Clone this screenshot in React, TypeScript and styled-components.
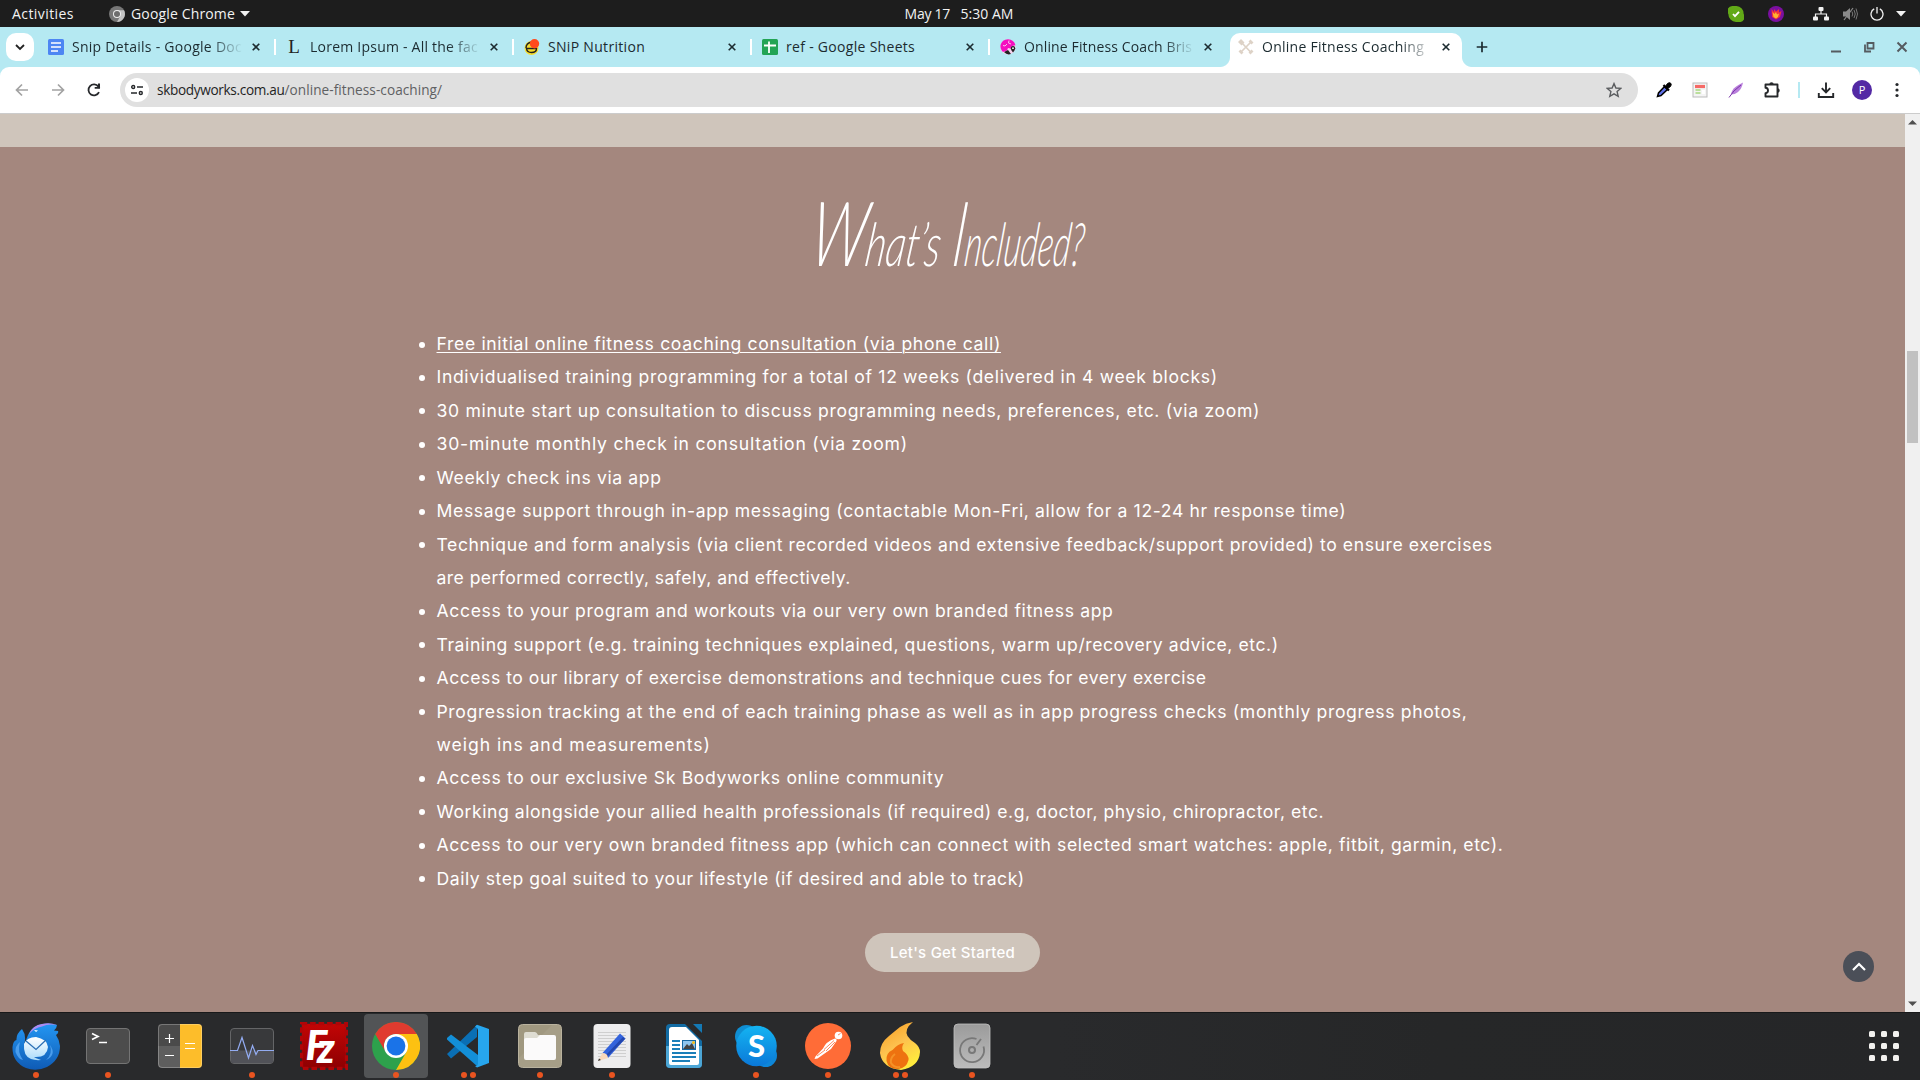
import React from "react";
import styled, { createGlobalStyle } from "styled-components";

const UI = `"Open Sans", "Noto Sans", sans-serif`;
const BODY = `Inter, "Open Sans", sans-serif`;

const GlobalStyle = createGlobalStyle`
  * { box-sizing: border-box; }
  html, body { margin: 0; background: #262729; overflow: hidden; }
  svg { display: block; flex: none; }
`;

const Screen = styled.div`
  display: flex;
  flex-direction: column;
  width: 1920px;
  height: 1080px;
  overflow: hidden;
  font-family: ${UI};
`;

/* ---------- desktop top bar ---------- */

const TopBar = styled.header`
  display: grid;
  grid-template-columns: 1fr auto 1fr;
  flex: none;
  height: 27px;
  padding: 0 14px 0 12px;
  background: #1d1d1d;
  color: #f2f2f2;
  font-size: 14px;
  line-height: 27px;
`;

const TopGroup = styled.div<{ $gap?: number; $end?: boolean }>`
  display: flex;
  align-items: center;
  justify-content: ${(p) => (p.$end ? "flex-end" : "flex-start")};
  gap: ${(p) => p.$gap ?? 0}px;
`;

const Label = styled.span<{ $track?: number; $width?: number }>`
  width: ${(p) => (p.$width ? `${p.$width}px` : "auto")};
  letter-spacing: ${(p) => p.$track ?? 0}px;
  white-space: pre;
`;

const Spacer = styled.span<{ $w: number }>`
  flex: none;
  width: ${(p) => p.$w}px;
`;

/* ---------- browser tabs ---------- */

const TabStrip = styled.nav`
  display: flex;
  flex: none;
  height: 40px;
  padding-left: 6px;
  background: #b5e9f2;
`;

const TabSearch = styled.button`
  display: grid;
  place-items: center;
  width: 28px;
  height: 28px;
  margin: 6px 4px 0 0;
  padding: 0;
  border: 0;
  border-radius: 10px;
  background: #fff;
`;

const TabBox = styled.div<{ $active?: boolean }>`
  position: relative;
  display: flex;
  align-items: center;
  flex: none;
  width: ${(p) => (p.$active ? 232 : 238)}px;
  height: 34px;
  margin-top: 6px;
  margin-left: ${(p) => (p.$active ? 2 : 0)}px;
  padding: 0 0 6px ${(p) => (p.$active ? 8 : 10)}px;
  border-radius: 10px 10px 0 0;
  background: ${(p) => (p.$active ? "#fff" : "transparent")};

  &::before,
  &::after {
    content: "";
    display: ${(p) => (p.$active ? "block" : "none")};
    position: absolute;
    bottom: 0;
    width: 10px;
    height: 10px;
  }
  &::before {
    left: -10px;
    background: radial-gradient(circle at 0 0, transparent 9.5px, #fff 10.5px);
  }
  &::after {
    right: -10px;
    background: radial-gradient(circle at 100% 0, transparent 9.5px, #fff 10.5px);
  }
`;

const TabTitle = styled.span<{ $track: number; $fade?: boolean }>`
  flex: none;
  width: 170px;
  margin-left: 8px;
  overflow: hidden;
  color: #1c2b30;
  font-size: 14px;
  line-height: 28px;
  letter-spacing: ${(p) => p.$track}px;
  white-space: nowrap;
  mask-image: ${(p) =>
    p.$fade ? "linear-gradient(90deg, #000 138px, transparent 171px)" : "none"};
`;

const CloseSlot = styled.span`
  display: grid;
  flex: none;
  place-items: center;
  width: 16px;
  margin-left: 6px;
`;

const Divider = styled.i<{ $hidden?: boolean }>`
  flex: none;
  width: 2px;
  height: 16px;
  margin-left: 10px;
  background: ${(p) => (p.$hidden ? "transparent" : "#fff")};
`;

const StripActions = styled.div`
  display: flex;
  flex: 1;
  align-items: center;
  justify-content: space-between;
  padding: 0 10px 1px 12px;
`;

const WindowButtons = styled.div`
  display: flex;
  align-items: center;
  gap: 17px;
`;

/* ---------- browser toolbar ---------- */

const ToolbarWrap = styled.div`
  flex: none;
  height: 47px;
  background: #b5e9f2;
`;

const Toolbar = styled.div`
  display: flex;
  align-items: center;
  height: 47px;
  padding: 0 14px 1px 14px;
  border-bottom: 1px solid #cccccc;
  border-radius: 9px 9px 0 0;
  background: #fff;
`;

const NavButtons = styled.div`
  display: flex;
  gap: 20px;
  width: 106px;
`;

const AddressBar = styled.div`
  display: flex;
  flex: none;
  align-items: center;
  width: 1518px;
  height: 34px;
  padding: 0 16px 0 5px;
  border-radius: 17px;
  background: #e0e0e0;
`;

const SiteInfo = styled.span`
  display: grid;
  place-items: center;
  width: 24px;
  height: 24px;
  border-radius: 50%;
  background: #fff;
`;

const Url = styled.div`
  display: flex;
  flex: 1;
  margin-left: 8px;
  padding-bottom: 1px;
  font-size: 13.6px;
  color: #1f1f1f;
`;

const UrlPath = styled(Label)`
  color: #5f6163;
`;

const Extensions = styled.div`
  display: flex;
  align-items: center;
  gap: 18px;
  margin-left: 17px;
`;

const ExtDivider = styled.i`
  width: 2px;
  height: 16px;
  margin: 0 -1px;
  background: #b5e9f2;
`;

const Avatar = styled.span`
  display: grid;
  place-items: center;
  width: 20px;
  height: 20px;
  margin: 0 -1px 0 -1px;
  border-radius: 50%;
  background: #5329a4;
  color: #fff;
  font-size: 11px;
  line-height: 20px;
`;

/* ---------- page ---------- */

const Viewport = styled.div`
  position: relative;
  display: flex;
  flex: none;
  height: 898px;
`;

const Page = styled.main`
  display: flex;
  flex-direction: column;
  width: 1905px;
  background: #a4877e;
`;

const Band = styled.div`
  flex: none;
  height: 33px;
  background: #cfc5bb;
`;

const Section = styled.section`
  display: flex;
  flex-direction: column;
  align-items: center;
  padding-top: 36px;
  color: #fff;
`;

const Heading = styled.h2`
  display: grid;
  grid-template-columns: 143px 135px;
  width: 278px;
  height: 96px;
  margin: 0;
  font-family: Lato, "Open Sans", sans-serif;
  font-size: 60px;
  font-style: italic;
  font-weight: 300;
  line-height: 96px;
  white-space: nowrap;
`;

const Word = styled.span<{ $squeeze: number }>`
  display: block;
  width: max-content;
  margin-left: -6px;
  transform: scaleX(${(p) => p.$squeeze}) skewX(-12deg);
  transform-origin: 0 75%;

  &::first-letter {
    font-size: 90px;
  }
`;

const List = styled.ul`
  width: 1086px;
  margin: 48px 0 0;
  padding: 0;
  list-style: none;
  font-family: ${BODY};
  font-size: 17.6px;
  line-height: 33.42px;
`;

const Item = styled.li`
  display: grid;
  grid-template-columns: 27px 1fr;

  &::before {
    content: "";
    width: 6px;
    height: 6px;
    margin: 14.5px 0 0 9px;
    border-radius: 50%;
    background: #fff;
  }
`;

const Lines = styled.div<{ $underlined?: boolean }>`
  display: flex;
  flex-direction: column;
  align-items: flex-start;
  text-decoration: ${(p) => (p.$underlined ? "underline 1px" : "none")};
  text-underline-offset: 2px;
`;

const Line = styled.span<{ $track: number }>`
  letter-spacing: ${(p) => p.$track + 0.01}px;
  white-space: nowrap;
`;

const StartButton = styled.button`
  width: 175px;
  height: 39px;
  margin-top: 38px;
  padding: 0 0 1px;
  border: 0;
  border-radius: 20px;
  background: #cfc5bb;
  color: #fff;
  font: 500 15px ${BODY};
  letter-spacing: 0.25px;
`;

const BackToTop = styled.button`
  position: absolute;
  right: 46px;
  bottom: 30px;
  display: grid;
  place-items: center;
  width: 31px;
  height: 31px;
  padding: 0;
  border: 0;
  border-radius: 50%;
  background: #4b4f58;
`;

const ScrollTrack = styled.aside`
  display: flex;
  flex-direction: column;
  align-items: center;
  width: 15px;
  padding: 6px 0;
  background: #f0f0f0;
`;

const Thumb = styled.div`
  width: 11px;
  height: 92px;
  margin: 226px 0 auto;
  background: #c1c1c1;
`;

/* ---------- dock ---------- */

const Dock = styled.footer`
  display: flex;
  flex: none;
  align-items: flex-start;
  height: 68px;
  padding: 1px 18px 0 4px;
  border-top: 1px solid #18191a;
  background: linear-gradient(90deg, #292a2c 0, #292a2c 55%, #262728 75%, #252628 100%);
`;

const Tile = styled.div<{ $active?: boolean }>`
  display: flex;
  flex-direction: column;
  align-items: center;
  gap: 2px;
  width: 64px;
  height: 64px;
  margin-right: 8px;
  padding-top: 8px;
  border-radius: 4px;
  background: ${(p) => (p.$active ? "#525456" : "transparent")};
`;

const Dots = styled.div`
  display: flex;
  gap: 3px;
`;

const Dot = styled.i`
  width: 6px;
  height: 6px;
  border-radius: 50%;
  background: #e95420;
`;

const AppsGrid = styled.div`
  display: grid;
  grid-template-columns: repeat(3, 6px);
  gap: 6px;
  margin: 17px 3px 0 auto;
`;

const AppDot = styled.i`
  width: 6px;
  height: 6px;
  border-radius: 1.5px;
  background: #f2f1ef;
`;

/* ---------- small icons ---------- */

const Caret = () => (
  <svg width="10" height="6" viewBox="0 0 10 6"><path d="M0 0h10L5 5.5z" fill="#f2f2f2" /></svg>
);

const Close = () => (
  <svg width="8" height="8" viewBox="0 0 8 8"><path d="M.7.7l6.6 6.6M7.3.7L.7 7.3" stroke="#1c2b30" strokeWidth="1.6" /></svg>
);

const ChromeMono = () => (
  <svg width="16" height="16" viewBox="0 0 16 16">
    <circle cx="8" cy="8" r="8" fill="#777" />
    <path d="M8 4.2h7A8 8 0 0 1 8 16l3.4-6z" fill="#c4c4c4" />
    <circle cx="8" cy="8" r="4" fill="#eee" /><circle cx="8" cy="8" r="3" fill="#6d6d6d" />
  </svg>
);

const SkypeStatus = () => (
  <svg width="16" height="16" viewBox="0 0 16 16">
    <path d="M4.5 0h4A7.5 7.5 0 0 1 15.6 8 5 5 0 0 1 11 16H8A7.7 7.7 0 0 1 .4 8 5 5 0 0 1 4.500 0z" fill="#62a917" />
    <path d="M5 8l2 2.2 4-4.4" fill="none" stroke="#fff" strokeWidth="1.8" />
  </svg>
);

const FlameStatus = () => (
  <svg width="16" height="16" viewBox="0 0 16 16">
    <circle cx="8" cy="8" r="8" fill="#7b0fa0" />
    <path d="M3.500 3L6 6V3l2 2.500L11 3v3.500L13.500 5 12 11l-4 2.500L4 11z" fill="#f4323c" />
    <path d="M4.500 6l2 2L8 6l1 2.500L11 7.500 10 11l-2 1.500L5.500 11z" fill="#ffb52e" />
  </svg>
);

const Network = () => (
  <svg width="16" height="14" viewBox="0 0 16 14" fill="#f2f2f2">
    <rect x="5.500" y="0" width="5" height="4" rx="1" /><rect x="0" y="9.500" width="5" height="4" rx="1" /><rect x="11" y="9.500" width="5" height="4" rx="1" />
    <path d="M2.500 10V7h11v3M8 4v3" fill="none" stroke="#f2f2f2" strokeWidth="1.200" />
  </svg>
);

const Volume = () => (
  <svg width="16" height="14" viewBox="0 0 16 14">
    <path d="M1 4.500h3L8 1v12L4 9.500H1z" fill="#8a8a8a" />
    <path d="M10 4.500q1.500 2.500 0 5M12 3q2.500 4 0 8M14 1.500q3 5.500 0 11" fill="none" stroke="#777" />
    <path d="M2 13L11 1" stroke="#8a8a8a" strokeWidth="1.200" />
  </svg>
);

const Power = () => (
  <svg width="14" height="14" viewBox="0 0 14 14" fill="none" stroke="#f2f2f2" strokeWidth="1.300">
    <path d="M4.200 1.900a6 6 0 1 0 5.600 0M7 0v6.500" />
  </svg>
);

const DocsIcon = () => (
  <svg width="16" height="16" viewBox="0 0 16 16">
    <rect width="16" height="16" rx="1.500" fill="#4d86f3" />
    <path d="M3 4h10M3 8h10M3 12h7" stroke="#fff" strokeWidth="1.700" />
  </svg>
);

const LoremText = styled.span`
  flex: none;
  width: 16px;
  color: #222;
  font: 19px/16px "Liberation Serif", serif;
  text-align: center;
`;

const SnipIcon = () => (
  <svg width="16" height="16" viewBox="0 0 16 16">
    <circle cx="7.500" cy="9" r="7" fill="#f5dc2c" />
    <path d="M2 9q0-5 6-6M2.500 9.500h10q0 4-5 4-4.500 0-5-4z" fill="none" stroke="#222" strokeWidth="1.400" />
    <circle cx="10.500" cy="4.700" r="4.700" fill="#ff4a1d" />
  </svg>
);

const SheetsIcon = () => (
  <svg width="16" height="16" viewBox="0 0 16 16">
    <rect width="16" height="16" rx="1.500" fill="#23a455" />
    <path d="M2 6.500h12M7 2.500v11.500" stroke="#fff" strokeWidth="1.800" />
  </svg>
);

const GlobeIcon = () => (
  <svg width="16" height="16" viewBox="0 0 16 16">
    <circle cx="8" cy="8" r="7.600" fill="#f9d3f0" />
    <path d="M.5 6Q2 .5 8 .2q6 .3 7.500 6L12 7l-1.500 2.500L8 9l-1 2.500L3 13Q0 10 .5 6z" fill="#f50fc0" />
    <path d="M3 6.500l2 .5 2-2M9 1.500L8.500 4l2.500 1" fill="none" stroke="#fbd0f1" strokeWidth=".9" />
    <path d="M4 13l4-2 3 4q-4 1.500-7-2z" fill="#222" />
    <path d="M13 7a2.200 2.200 0 0 1 2.200 2.200Q15.200 11 13 13.500 10.800 11 10.800 9.200A2.200 2.200 0 0 1 13 7z" fill="#222" /><circle cx="13" cy="9.200" r=".9" fill="#fff" />
  </svg>
);

const WrenchIcon = () => (
  <svg width="16" height="16" viewBox="0 0 16 16" fill="none" stroke="#ddd2c6">
    <path d="M3.500 3.500l9.500 10M13 3L3 13" strokeWidth="1.700" />
    <path d="M1 4L4 1M2.500 5.500L5.500 2.500M11.500 1.500L14.500 4.500M1.500 11.500L4.500 14.500M11.500 14.500l3-3" strokeWidth="2.800" />
  </svg>
);

const ArrowIcon = ({ flip = false }: { flip?: boolean }) => (
  <svg width="16" height="16" viewBox="0 0 16 16" fill="none" stroke="#a2a2a2" strokeWidth="1.700">
    <path d={flip ? "M2 8h11M8 2.500L13.500 8 8 13.500" : "M14 8H3M8 2.500L2.500 8 8 13.500"} />
  </svg>
);

const Reload = () => (
  <svg width="16" height="16" viewBox="0 0 16 16">
    <path d="M13 10.200A5.500 5.500 0 1 1 12.400 4.600L13.500 6" fill="none" stroke="#26282b" strokeWidth="1.800" />
    <path d="M14 1.500v5.300H8.700V5H12V1.500z" fill="#26282b" />
  </svg>
);

const Tune = () => (
  <svg width="12" height="12" viewBox="0 0 12 12" fill="none" stroke="#26282b" strokeWidth="1.400">
    <circle cx="2.200" cy="3" r="1.500" /><circle cx="9.800" cy="9" r="1.500" /><path d="M6 3h6M0 9h6" />
  </svg>
);

const Star = () => (
  <svg width="16" height="16" viewBox="0 0 16 16">
    <path d="M8 1.600l1.900 4.400 4.800.4-3.600 3.200 1.100 4.700L8 11.800l-4.200 2.500 1.100-4.700L1.300 6.400l4.800-.4z" fill="none" stroke="#5a5c5f" strokeWidth="1.400" />
  </svg>
);

const Dropper = () => (
  <svg width="18" height="18" viewBox="0 0 18 18">
    <path d="M2.500 15.500l1-3.500 6-6.500 3 3-6.500 6z" fill="#5f70e6" stroke="#000" strokeWidth="1.500" />
    <path d="M8.500 4l5.500 5.500" stroke="#000" strokeWidth="2.200" />
    <path d="M10 6l2.500-3.500q2-1.500 3.200-.3t-.2 3.300l-3.500 2.500z" fill="#000" stroke="#000" />
  </svg>
);

const PageExt = () => (
  <svg width="18" height="18" viewBox="0 0 18 18">
    <rect x="2" y="2" width="14" height="14" fill="#f4f4f4" stroke="#bbb" />
    <path d="M4 5.500h10" stroke="#f56a66" strokeWidth="3.200" /><path d="M4.500 9h5M4.500 12h5" stroke="#a6d87c" strokeWidth="1.300" /><path d="M11 9h3v4h-3z" fill="#fff" />
  </svg>
);

const Feather = () => (
  <svg width="18" height="18" viewBox="0 0 18 18">
    <path d="M4 13.500Q4.500 9 8.500 6 12 3.500 16 1.500 15 7.500 11 11 8 13.500 4 13.500z" fill="#b97fdc" />
    <path d="M2 16.500Q6 9.500 14 4" fill="none" stroke="#7a36a8" />
  </svg>
);

const Puzzle = () => (
  <svg width="18" height="18" viewBox="0 0 18 18">
    <path d="M2.500 3.500h12v12h-12v-3.300q2.500-.2 2.500-2.700T2.500 6.800z" fill="none" stroke="#26282b" strokeWidth="1.900" strokeLinejoin="round" />
    <path d="M6.300 3.500a2.200 2.200 0 0 1 4.400 0zM14.500 7.300a2.200 2.200 0 0 1 0 4.400z" fill="#26282b" />
  </svg>
);

const Download = () => (
  <svg width="18" height="18" viewBox="0 0 18 18" fill="none" stroke="#26282b" strokeWidth="1.900">
    <path d="M9 1.500V11M4.800 7.200L9 11.400l4.200-4.200M1.800 12v4h14.400v-4" />
  </svg>
);

const Kebab = () => (
  <svg width="16" height="16" viewBox="0 0 16 16" fill="#26282b">
    <circle cx="8" cy="2.500" r="1.600" /><circle cx="8" cy="8" r="1.600" /><circle cx="8" cy="13.500" r="1.600" />
  </svg>
);

/* ---------- dock icons ---------- */

const Icon = ({ children }: { children: React.ReactNode }) => (
  <svg width="48" height="48" viewBox="0 0 48 48">{children}</svg>
);

const Thunderbird = () => (
  <Icon>
    <defs>
      <linearGradient id="tb" x1="0" y1="0" x2="0" y2="1"><stop offset="0" stopColor="#2497f3" /><stop offset="1" stopColor="#0f5bb5" /></linearGradient>
      <linearGradient id="tbm" x1="0" y1="0" x2="0" y2="1"><stop offset="0" stopColor="#fff" /><stop offset="1" stopColor="#a9dbfb" /></linearGradient>
    </defs>
    <path d="M10 7Q4 12 4.500 18 1 19 .5 25 0 40 14 46q10 4 21-1Q48 38 48 24q-.5-6-4-11 3-2 2-4l-4-.5q3-3 3-5.500Q38 .5 30 2 20 4 16 13l-4 10Q15 14 10 7z" fill="url(#tb)" />
    <path d="M17 12Q21 3 30 2q8-2 15 1-9-1.500-15 1.500Q22 6 17 12z" fill="#ad8cf2" />
    <path d="M8 20Q5 30 11 38 6 37 3.500 30 3 24 8 20zM34 38q7-6 4-15 7 10-4 15z" fill="#58a9f5" opacity=".8" />
    <path d="M12 22q-1 12 7 15 4 1.500 10 1-6-2-7-3 13 1 14-10-1-8-12-10-9 0-12 7z" fill="url(#tbm)" />
    <path d="M14 19l10 8.500L34 18" fill="none" stroke="#2b6fb5" strokeWidth="1.300" />
    <path d="M22 8l4 .5-2 1.500z" fill="#fff" />
  </Icon>
);

const Terminal = () => (
  <Icon>
    <rect x="2.500" y="6.500" width="43" height="35" rx="3.500" fill="#4c4c4c" stroke="#747474" />
    <path d="M8 11.500l6 3-6 3" fill="none" stroke="#fff" strokeWidth="1.700" /><path d="M15 20.500h8" stroke="#fff" strokeWidth="1.500" />
  </Icon>
);

const Calculator = () => (
  <Icon>
    <rect x="2" y="2" width="44" height="44" rx="4" fill="#5e5e5e" />
    <path d="M6 2h18v22H2V6a4 4 0 0 1 4-4z" fill="#4a4a4a" />
    <path d="M24 2h18a4 4 0 0 1 4 4v36a4 4 0 0 1-4 4H24z" fill="#fdbd2a" />
    <rect x="2.500" y="2.500" width="43" height="43" rx="3.500" fill="none" stroke="#fff" opacity=".25" />
    <path d="M9 16.500h9M13.500 12v9M9 33.500h9M29 21.500h10M29 26.500h10" stroke="#fff" strokeWidth="1.200" />
  </Icon>
);

const Monitor = () => (
  <Icon>
    <rect x="2.500" y="6.500" width="43" height="35" rx="3.500" fill="#38393b" stroke="#646567" />
    <path d="M3 28.500h42V39q0 2-2 2H5q-2 0-2-2z" fill="#515258" />
    <path d="M2 28.500h7.500l4.500-13 6.500 20.500 4-12.500 3.500 9 2-4H46" fill="none" stroke="#93acf2" strokeWidth="1.200" />
  </Icon>
);

const FilezillaText = styled.text<{ $size: number }>`
  font: italic 900 ${(p) => p.$size}px Lato, sans-serif;
  fill: #fff;
`;

const Filezilla = () => (
  <Icon>
    <defs><linearGradient id="fz" x1="0" y1="0" x2="0" y2="1"><stop offset="0" stopColor="#c20505" /><stop offset="1" stopColor="#8d0002" /></linearGradient></defs>
    <rect x="1.800" y="1.800" width="44.400" height="44.400" fill="url(#fz)" />
    <rect x="1.600" y="1.600" width="44.800" height="44.800" fill="none" stroke="#b00508" strokeWidth="3.200" strokeDasharray="5.600 2.900" />
    <FilezillaText $size={41} x="5.500" y="37.500">F</FilezillaText>
    <FilezillaText $size={41} x="17" y="40.500">z</FilezillaText>
  </Icon>
);

const Chrome = () => (
  <Icon>
    <circle cx="24" cy="24" r="24" fill="#2da14c" />
    <path d="M24 12h20.800A24 24 0 0 1 24 48l10.400-18z" fill="#fdc111" />
    <path d="M3.200 12a24 24 0 0 1 41.600 0H24a12 12 0 0 0-10.400 18z" fill="#e03b2f" />
    <circle cx="24" cy="24" r="12" fill="#fff" /><circle cx="24" cy="24" r="9.400" fill="#1a73e8" />
  </Icon>
);

const VsCode = () => (
  <Icon>
    <path d="M3 32L33 3v12L7 36.500z" fill="#0a6fb5" />
    <path d="M3 16l4-3.500L34 33v12L3 17.500z" fill="#138fd8" />
    <path d="M33 2.700L45 7v34l-12 4.500-2-1.500q3 0 3-2.500V8q0-2-3-3.500z" fill="#27a6ee" />
  </Icon>
);

const Files = () => (
  <Icon>
    <rect x="2.500" y="2.500" width="43" height="43" rx="4" fill="#a09880" stroke="#b9b29e" />
    <path d="M3 36L36 3h9v42H3z" fill="#aba48e" opacity=".5" />
    <path d="M8 15v-3q0-2 2-2h9q1.500 0 3 3l16 .5V20H8z" fill="#dedcd2" />
    <path d="M10 16h11l3-3h14q2 0 2 2v21q0 2-2 2H10q-2 0-2-2V18q0-2 2-2z" fill="#fbfafa" />
  </Icon>
);

const Editor = () => (
  <Icon>
    <rect x="5.500" y="2" width="37" height="44" rx="4" fill="#ededee" />
    <path d="M10 10.500h28M10 13.500h28M10 16.500h28M10 19.500h28M10 22.500h28M10 25.500h28M10 28.500h28M10 31.500h28M10 34.500h28" stroke="#cfcfcf" />
    <path d="M14.500 31L32 11.500l5.500 5L20 36z" fill="#3363dc" /><path d="M19 35l18-18-2-2-18 19z" fill="#2347ae" />
    <path d="M14.500 31L10 39l10-3q-.5-5-5.500-5z" fill="#f9d8bb" /><path d="M11 36.500L10 39l3-1z" fill="#333" />
  </Icon>
);

const Writer = () => (
  <Icon>
    <path d="M10 2h15l17 17v23q0 4-4 4H10q-4 0-4-4V6q0-4 4-4z" fill="#126ba3" />
    <path d="M6 24h36v18q0 4-4 4H10q-4 0-4-4z" fill="#4ca6d6" />
    <path d="M33 2h9v9z" fill="#1479b5" />
    <path d="M12 5h14l13 13v23q0 2-2 2H11q-2 0-2-2V8q0-3 3-3z" fill="#fff" />
    <path d="M12 19h8M12 23h8M12 27h8M12 31h24M12 35h24M12 39h18" stroke="#1b7fb9" strokeWidth="1.800" />
    <rect x="22.500" y="18.500" width="13" height="9" fill="#8fc6ef" stroke="#1668a2" /><path d="M23 27l4-5 2 2 3-3 3 6z" fill="#444" /><circle cx="33.500" cy="20.500" r="1.500" fill="#f5bd16" />
  </Icon>
);

const SkypeS = styled.text`
  font: 900 31px Lato, sans-serif;
  fill: #fff;
  text-anchor: middle;
`;

const Skype = () => (
  <Icon>
    <defs><linearGradient id="sk" x1="0" y1="0" x2="0" y2="1"><stop offset="0" stopColor="#14b4f2" /><stop offset="1" stopColor="#0a78d8" /></linearGradient></defs>
    <circle cx="14.500" cy="14.500" r="11.500" fill="#0f8ed3" /><circle cx="33.500" cy="33.500" r="11.500" fill="#0d86d9" />
    <circle cx="24.500" cy="24" r="20.300" fill="url(#sk)" />
    <SkypeS x="24.500" y="34.500">S</SkypeS>
  </Icon>
);

const Postman = () => (
  <Icon>
    <circle cx="24" cy="24" r="23" fill="#ff6c37" />
    <circle cx="34.500" cy="13.500" r="3.800" fill="#fff" />
    <path d="M31 16.500q2 0 1.500 2.500L27 27 13.500 36.500l-3 .5 1-2.500L19 26.500q3-7 12-10z" fill="#fff" />
    <path d="M30 18.500L20 27.500M31 20l-9 9M13 34l8-6M34 13l2.500-1.500" stroke="#ff6c37" strokeWidth=".8" />
  </Icon>
);

const Flame = () => (
  <Icon>
    <defs><linearGradient id="fl" x1="0" y1="0" x2=".5" y2="1"><stop offset="0" stopColor="#f79a1e" /><stop offset=".55" stopColor="#fdc14e" /><stop offset="1" stopColor="#ffea3d" /></linearGradient></defs>
    <path d="M37 0Q28 7 31.500 14 34 18 39 21q5 4 5 9Q43 45 25 48 6 46 4 31 4 21 13 14q6-5 11-9Q30 1 37 0z" fill="url(#fl)" />
    <path d="M28 21q-3 4-1 8 6 4 5.500 9-2 8-10 9-10 .5-12-8-1-8 6-11 5-6 11.500-7z" fill="#ee7210" />
    <path d="M19 32q-5 4-4 9 3 5 9 4" fill="none" stroke="#f59226" strokeWidth="2" />
  </Icon>
);

const Disk = () => (
  <Icon>
    <defs><linearGradient id="dk" x1="0" y1="0" x2="0" y2="1"><stop offset="0" stopColor="#9b9b9b" /><stop offset="1" stopColor="#bcbcbc" /></linearGradient></defs>
    <rect x="6" y="2" width="36" height="44" rx="4" fill="url(#dk)" stroke="#c2c2c2" strokeWidth=".8" />
    <path d="M28.500 17A12 12 0 1 0 35.500 24.500M28.500 23l4.500-6" fill="none" stroke="#787878" strokeWidth="1.800" />
    <circle cx="24" cy="28" r="3" fill="none" stroke="#787878" strokeWidth="2" />
  </Icon>
);

/* ---------- data ---------- */

const tabs = [
  { title: "Snip Details - Google Doc", track: 0.27, icon: <DocsIcon />, fade: true },
  { title: "Lorem Ipsum - All the fac", track: 0.23, icon: <LoremText>L</LoremText>, fade: true },
  { title: "SNiP Nutrition", track: 0.31, icon: <SnipIcon /> },
  { title: "ref - Google Sheets", track: 0.3, icon: <SheetsIcon /> },
  { title: "Online Fitness Coach Bris", track: 0.13, icon: <GlobeIcon />, fade: true },
  { title: "Online Fitness Coaching", track: 0.27, icon: <WrenchIcon />, fade: true, active: true },
];

const items: { lines: [string, number][]; underlined?: boolean }[] = [
  { lines: [["Free initial online fitness coaching consultation (via phone call)", 0.64]], underlined: true },
  { lines: [["Individualised training programming for a total of 12 weeks (delivered in 4 week blocks)", 0.641]] },
  { lines: [["30 minute start up consultation to discuss programming needs, preferences, etc. (via zoom)", 0.65]] },
  { lines: [["30-minute monthly check in consultation (via zoom)", 0.765]] },
  { lines: [["Weekly check ins via app", 0.6]] },
  { lines: [["Message support through in-app messaging (contactable Mon-Fri, allow for a 12-24 hr response time)", 0.62]] },
  {
    lines: [
      ["Technique and form analysis (via client recorded videos and extensive feedback/support provided) to ensure exercises", 0.565],
      ["are performed correctly, safely, and effectively.", 0.42],
    ],
  },
  { lines: [["Access to your program and workouts via our very own branded fitness app", 0.62]] },
  { lines: [["Training support (e.g. training techniques explained, questions, warm up/recovery advice, etc.)", 0.553]] },
  { lines: [["Access to our library of exercise demonstrations and technique cues for every exercise", 0.513]] },
  {
    lines: [
      ["Progression tracking at the end of each training phase as well as in app progress checks (monthly progress photos,", 0.615],
      ["weigh ins and measurements)", 0.93],
    ],
  },
  { lines: [["Access to our exclusive Sk Bodyworks online community", 0.64]] },
  { lines: [["Working alongside your allied health professionals (if required) e.g, doctor, physio, chiropractor, etc.", 0.535]] },
  { lines: [["Access to our very own branded fitness app (which can connect with selected smart watches: apple, fitbit, garmin, etc).", 0.578]] },
  { lines: [["Daily step goal suited to your lifestyle (if desired and able to track)", 0.525]] },
];

const dockApps = [
  { icon: <Thunderbird />, windows: 1 },
  { icon: <Terminal />, windows: 1 },
  { icon: <Calculator />, windows: 0 },
  { icon: <Monitor />, windows: 1 },
  { icon: <Filezilla />, windows: 0 },
  { icon: <Chrome />, windows: 1, active: true },
  { icon: <VsCode />, windows: 2 },
  { icon: <Files />, windows: 1 },
  { icon: <Editor />, windows: 1 },
  { icon: <Writer />, windows: 0 },
  { icon: <Skype />, windows: 1 },
  { icon: <Postman />, windows: 1 },
  { icon: <Flame />, windows: 2 },
  { icon: <Disk />, windows: 1 },
];

export default function App() {
  return (
    <Screen>
      <GlobalStyle />
      <TopBar>
        <TopGroup>
          <Label $track={0.43} $width={97}>Activities</Label>
          <ChromeMono />
          <Spacer $w={6} />
          <Label $track={0.15} $width={109}>Google Chrome</Label>
          <Caret />
        </TopGroup>
        <TopGroup>
          <Label $track={-0.3} $width={56}>May 17</Label>
          <Label>5:30 AM</Label>
        </TopGroup>
        <TopGroup $end>
          <SkypeStatus />
          <Spacer $w={24} />
          <FlameStatus />
          <Spacer $w={29} />
          <Network />
          <Spacer $w={13} />
          <Volume />
          <Spacer $w={12} />
          <Power />
          <Spacer $w={12} />
          <Caret />
        </TopGroup>
      </TopBar>

      <TabStrip>
        <TabSearch>
          <svg width="10" height="7" viewBox="0 0 10 7"><path d="M1 1l4 4 4-4" fill="none" stroke="#222" strokeWidth="1.8" /></svg>
        </TabSearch>
        {tabs.map((t, i) => (
          <TabBox key={t.title} $active={t.active}>
            {t.icon}
            <TabTitle $track={t.track} $fade={t.fade}>{t.title}</TabTitle>
            <CloseSlot><Close /></CloseSlot>
            {!t.active && <Divider $hidden={i === 4} />}
          </TabBox>
        ))}
        <StripActions>
          <svg width="16" height="12" viewBox="0 0 16 12"><path d="M8 .7v10.600M2.700 6h10.600" stroke="#1c2b30" strokeWidth="1.700" /></svg>
          <WindowButtons>
            <svg width="16" height="16" viewBox="0 0 16 16"><path d="M3 12.500h10" stroke="#555b60" strokeWidth="2" /></svg>
            <svg width="16" height="16" viewBox="0 0 16 16" fill="none" stroke="#555b60" strokeWidth="1.800"><path d="M6.500 4h6v5.500h-6zM4 5.500v7h6" /></svg>
            <svg width="16" height="16" viewBox="0 0 16 16" fill="none" stroke="#555b60" strokeWidth="2"><path d="M3.500 3.500l9 9M12.500 3.500l-9 9" /></svg>
          </WindowButtons>
        </StripActions>
      </TabStrip>

      <ToolbarWrap>
        <Toolbar>
          <NavButtons><ArrowIcon /><ArrowIcon flip /><Reload /></NavButtons>
          <AddressBar>
            <SiteInfo><Tune /></SiteInfo>
            <Url>
              <Label $track={-0.33} $width={127.5}>skbodyworks.com.au</Label>
              <UrlPath $track={0.06}>/online-fitness-coaching/</UrlPath>
            </Url>
            <Star />
          </AddressBar>
          <Extensions>
            <Dropper /><PageExt /><Feather /><Puzzle /><ExtDivider /><Download />
            <Avatar>P</Avatar><Kebab />
          </Extensions>
        </Toolbar>
      </ToolbarWrap>

      <Viewport>
        <Page>
          <Band />
          <Section>
            <Heading>
              <Word $squeeze={0.66}>What’s</Word>
              <Word $squeeze={0.55}>Included?</Word>
            </Heading>
            <List>
              {items.map((item) => (
                <Item key={item.lines[0][0]}>
                  <Lines $underlined={item.underlined}>
                    {item.lines.map(([text, track]) => (
                      <Line key={text} $track={track}>{text}</Line>
                    ))}
                  </Lines>
                </Item>
              ))}
            </List>
            <StartButton>Let's Get Started</StartButton>
          </Section>
        </Page>
        <ScrollTrack>
          <svg width="9" height="5" viewBox="0 0 9 5"><path d="M4.500 0L9 4.500H0z" fill="#505050" /></svg>
          <Thumb />
          <svg width="9" height="5" viewBox="0 0 9 5"><path d="M0 .5h9L4.500 5z" fill="#505050" /></svg>
        </ScrollTrack>
        <BackToTop>
          <svg width="14" height="9" viewBox="0 0 14 9"><path d="M1 8l6-6 6 6" fill="none" stroke="#fff" strokeWidth="2.200" /></svg>
        </BackToTop>
      </Viewport>

      <Dock>
        {dockApps.map((app, i) => (
          <Tile key={i} $active={app.active}>
            {app.icon}
            <Dots>{Array.from({ length: app.windows }, (_, n) => <Dot key={n} />)}</Dots>
          </Tile>
        ))}
        <AppsGrid>{Array.from({ length: 9 }, (_, n) => <AppDot key={n} />)}</AppsGrid>
      </Dock>
    </Screen>
  );
}
